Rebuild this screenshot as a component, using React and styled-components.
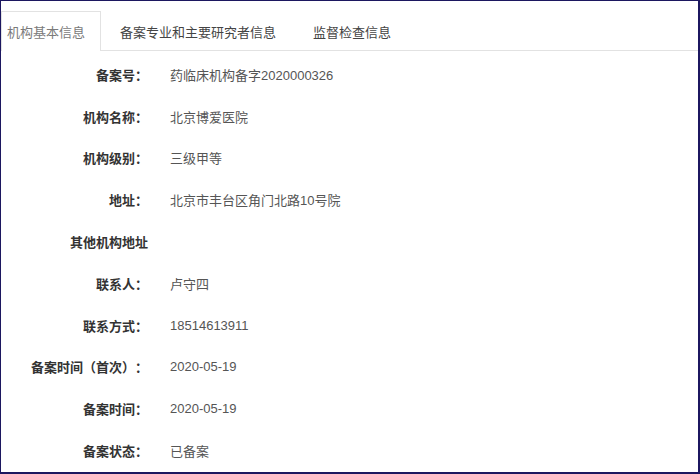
import React, { useState } from 'react';
import styled, { createGlobalStyle } from 'styled-components';

const GlobalStyle = createGlobalStyle`
  html, body {
    margin: 0;
    padding: 0;
    background: #ffffff;
  }
  body {
    font-family: "Liberation Sans", "Noto Sans CJK SC", sans-serif;
    text-spacing-trim: space-all;
  }
`;

const Frame = styled.div`
  box-sizing: border-box;
  width: 700px;
  height: 474px;
  border-top: 1px solid #1c1760;
  border-left: 1px solid #1c1760;
  border-right: 2px solid #1c1760;
  border-bottom: 2px solid #1c1760;
  background: #ffffff;
  padding-top: 10px;
  overflow: hidden;
`;

const TabBar = styled.div`
  display: flex;
  height: 39px;
  border-bottom: 1px solid #e2e2e2;
`;

const Tab = styled.div`
  box-sizing: border-box;
  height: ${(p) => (p.$active ? '40px' : '39px')};
  display: flex;
  align-items: center;
  padding: ${(p) => (p.$active ? '0 15px 0 5px' : '0 17px')};
  margin-left: ${(p) => (p.$active ? '0' : '1px')};
  font-size: 13px;
  color: ${(p) => (p.$active ? '#7a7a7a' : '#444')};
  background: #fff;
  border: 1px solid ${(p) => (p.$active ? '#e2e2e2' : 'transparent')};
  border-bottom: none;
  cursor: pointer;
`;

const Body = styled.div`
  padding-top: 2.5px;
`;

const Row = styled.div`
  display: flex;
  align-items: center;
  height: 41.8px;
  font-size: 13px;
`;

const Label = styled.div`
  width: 147px;
  text-align: right;
  font-weight: bold;
  color: #333;
  white-space: nowrap;
`;

const Value = styled.div`
  margin-left: 22px;
  color: #555;
`;

const tabs = ['机构基本信息', '备案专业和主要研究者信息', '监督检查信息'];

const rows = [
  ['备案号：', '药临床机构备字2020000326'],
  ['机构名称：', '北京博爱医院'],
  ['机构级别：', '三级甲等'],
  ['地址：', '北京市丰台区角门北路10号院'],
  ['其他机构地址', ''],
  ['联系人：', '卢守四'],
  ['联系方式：', '18514613911'],
  ['备案时间（首次）：', '2020-05-19'],
  ['备案时间：', '2020-05-19'],
  ['备案状态：', '已备案'],
];

export default function App() {
  const [active, setActive] = useState(0);
  return (
    <>
      <GlobalStyle />
      <Frame>
        <TabBar>
          {tabs.map((t, i) => (
            <Tab key={t} $active={i === active} onClick={() => setActive(i)}>
              {t}
            </Tab>
          ))}
        </TabBar>
        <Body>
          {rows.map(([label, value]) => (
            <Row key={label}>
              <Label>{label}</Label>
              <Value>{value}</Value>
            </Row>
          ))}
        </Body>
      </Frame>
    </>
  );
}
